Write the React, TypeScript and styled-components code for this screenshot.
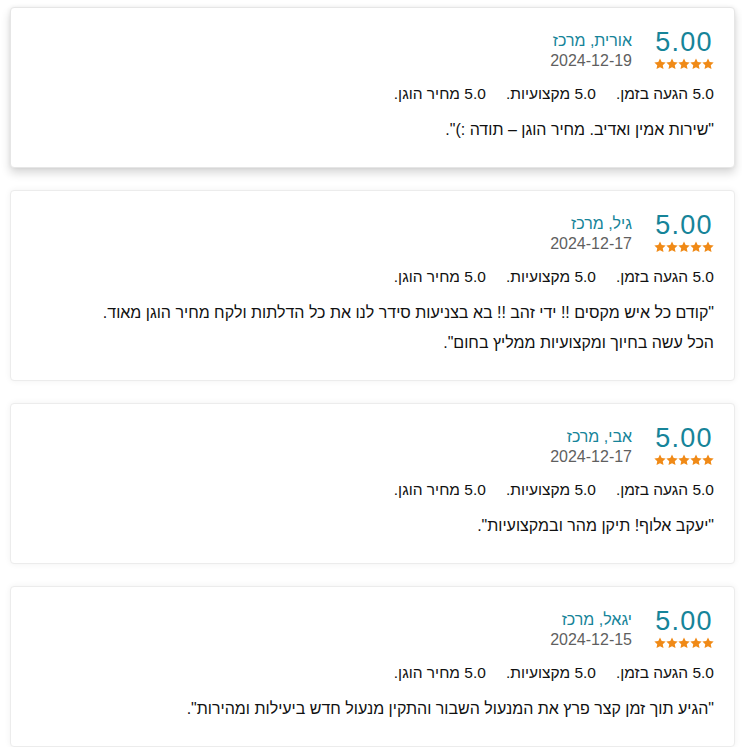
import React from "react";
import styled, { createGlobalStyle } from "styled-components";

const Global = createGlobalStyle`
  html, body { margin: 0; padding: 0; background: #ffffff; }
  body { font-family: "Liberation Sans", Arial, sans-serif; }
`;

const Page = styled.div`
  direction: rtl;
  padding: 7px 7px 0 10px;
  display: flex;
  flex-direction: column;
  gap: 22px;
`;

const Card = styled.div<{ $raised?: boolean }>`
  background: #fff;
  border: 1px solid ${(p) => (p.$raised ? "#e6e6e6" : "#ececec")};
  border-radius: 4px;
  padding: 18px 20px 22px;
  box-shadow: ${(p) =>
    p.$raised
      ? "0 5px 10px rgba(0,0,0,0.16), 0 0 4px rgba(0,0,0,0.06)"
      : "0 0 6px rgba(0,0,0,0.06)"};
`;

const Header = styled.div`
  display: flex;
  align-items: flex-start;
  gap: 22px;
`;

const ScoreBlock = styled.div`
  display: flex;
  flex-direction: column;
  align-items: center;
`;

const Score = styled.div`
  font-size: 27px;
  line-height: 32px;
  color: #168499;
  letter-spacing: 1.3px;
  direction: ltr;
`;

const Stars = styled.div`
  display: flex;
  gap: 0;
  direction: ltr;
  height: 12px;
`;

const Who = styled.div`
  display: flex;
  flex-direction: column;
  margin-top: 4px;
`;

const Name = styled.div`
  font-size: 16px;
  line-height: 22px;
  color: #168499;
`;

const DateText = styled.div`
  font-size: 16px;
  line-height: 18px;
  color: #5f5f5f;
`;

const Ratings = styled.div`
  display: flex;
  gap: 20px;
  margin-top: 14px;
  font-size: 15.5px;
  line-height: 20px;
  color: #111;
`;

const Quote = styled.div`
  margin-top: 11px;
  font-size: 16px;
  line-height: 30px;
  color: #111;
`;

const Star = () => (
  <svg width="12" height="12" viewBox="0 0 24 24">
    <path
      fill="#f08a17"
      d="M12 0.8l3.4 7.2 7.9 1-5.8 5.4 1.5 7.8L12 18.3l-7 3.9 1.5-7.8-5.8-5.4 7.9-1z"
    />
  </svg>
);

type Review = { name: string; date: string; text: React.ReactNode };

const reviews: Review[] = [
  { name: "אורית, מרכז", date: "2024-12-19", text: '"שירות אמין ואדיב. מחיר הוגן – תודה :)".' },
  {
    name: "גיל, מרכז",
    date: "2024-12-17",
    text: (
      <>
        "קודם כל איש מקסים !! ידי זהב !! בא בצניעות סידר לנו את כל הדלתות ולקח מחיר הוגן מאוד.
        <br />
        הכל עשה בחיוך ומקצועיות ממליץ בחום".
      </>
    ),
  },
  { name: "אבי, מרכז", date: "2024-12-17", text: '"יעקב אלוף! תיקן מהר ובמקצועיות".' },
  {
    name: "יגאל, מרכז",
    date: "2024-12-15",
    text: '"הגיע תוך זמן קצר פרץ את המנעול השבור והתקין מנעול חדש ביעילות ומהירות".',
  },
];

export default function App() {
  return (
    <>
      <Global />
      <Page>
        {reviews.map((r, i) => (
          <Card key={i} $raised={i === 0}>
            <Header>
              <ScoreBlock>
                <Score>5.00</Score>
                <Stars>
                  {[0, 1, 2, 3, 4].map((s) => (
                    <Star key={s} />
                  ))}
                </Stars>
              </ScoreBlock>
              <Who>
                <Name>{r.name}</Name>
                <DateText>{r.date}</DateText>
              </Who>
            </Header>
            <Ratings>
              <span>5.0 הגעה בזמן.</span>
              <span>5.0 מקצועיות.</span>
              <span>5.0 מחיר הוגן.</span>
            </Ratings>
            <Quote>{r.text}</Quote>
          </Card>
        ))}
      </Page>
    </>
  );
}
